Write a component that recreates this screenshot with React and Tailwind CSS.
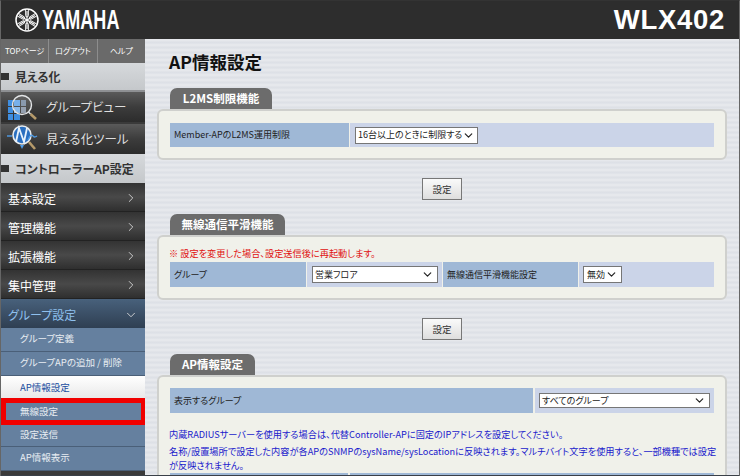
import React from 'react';
import { ChevronRight, ChevronDown } from 'lucide-react';

const font = "font-['Noto_Sans_CJK_JP','Liberation_Sans',sans-serif] [font-feature-settings:'palt']";

function YamahaMark() {
  const fork = (
    <g>
      <path d="M12 12V21M12 12V3" stroke="#fff" strokeWidth="1.1" />
      <path d="M10.6 1.8V7.5Q10.6 9 12 9Q13.4 9 13.4 7.5V1.8" fill="none" stroke="#fff" strokeWidth="0.9" />
      <path d="M10.6 22.2V16.5Q10.6 15 12 15Q13.4 15 13.4 16.5V22.2" fill="none" stroke="#fff" strokeWidth="0.9" />
    </g>
  );
  return (
    <svg width="24" height="24" viewBox="0 0 24 24" className="shrink-0">
      <circle cx="12" cy="12" r="11" fill="none" stroke="#fff" strokeWidth="1.5" />
      {fork}
      <g transform="rotate(60 12 12)">{fork}</g>
      <g transform="rotate(120 12 12)">{fork}</g>
    </svg>
  );
}

function GroupViewIcon() {
  return (
    <svg width="40" height="30" viewBox="0 0 40 30">
      <rect x="7" y="8" width="5" height="6" fill="#3f8ee0" />
      <rect x="13" y="8" width="6" height="6" fill="#6aa8e8" />
      <rect x="20" y="8" width="5" height="6" fill="#7d8fa5" />
      <rect x="7" y="15" width="5" height="6" fill="#3f8ee0" />
      <rect x="13" y="15" width="6" height="6" fill="#7fb4ea" />
      <rect x="20" y="15" width="5" height="6" fill="#8a97a8" />
      <rect x="7" y="22" width="5" height="6" fill="#3f8ee0" />
      <rect x="13" y="22" width="6" height="6" fill="#3f8ee0" />
      <circle cx="21" cy="13" r="9.5" fill="#ffffff18" stroke="#e4e6e8" strokeWidth="1.4" />
      <path d="M27.5 20L29.5 22" stroke="#dfe2e5" strokeWidth="1.4" />
      <path d="M29.5 22L35 27" stroke="#b59a6a" strokeWidth="2.6" />
    </svg>
  );
}

function ToolIcon() {
  return (
    <svg width="40" height="30" viewBox="0 0 40 30">
      <circle cx="21" cy="11" r="9" fill="#2a6fc0" stroke="#e8ebee" strokeWidth="1.6" />
      <path d="M6 12H11" stroke="#4f9de8" strokeWidth="1.4" />
      <path d="M15 18L18 4L23 18L26 4" fill="none" stroke="#e8f2fc" strokeWidth="1.8" />
      <path d="M27 16Q30 9 32 12Q33 14 36 12" fill="none" stroke="#4f9de8" strokeWidth="1.4" />
      <path d="M19 21H23L21 25Z" fill="#4f9de8" />
      <path d="M28 18L34 25" stroke="#b59a6a" strokeWidth="2.6" />
    </svg>
  );
}

function SectionTitle({ children, className }) {
  return (
    <div className={"flex items-center gap-[6px] text-[12px] font-bold text-[#333] bg-gradient-to-b from-[#d6d9dc] to-[#c5c8cb] border-[#8e9093] " + className}>
      <span className="w-[8px] h-[7px] bg-[#333]" />
      {children}
    </div>
  );
}

function ToolLink({ icon, label, className }) {
  return (
    <div className={"h-[30px] flex items-center bg-gradient-to-b from-[#5a5a5a] via-[#3c3c3c] to-[#2c2c2c] text-[#dedede] text-[12.5px] " + className}>
      <span className="w-[45px] h-[30px] shrink-0 overflow-hidden">{icon}</span>
      {label}
    </div>
  );
}

function MenuItem({ label }) {
  return (
    <div className="h-[29px] shrink-0 flex items-center justify-between pl-[7px] pr-[7px] pt-[3px] bg-gradient-to-b from-[#333] via-[#494949] to-[#2f2f2f] border-b border-[#222] text-white text-[12px]">
      {label}
      <ChevronRight size={14} strokeWidth={1.5} className="text-[#ddd] -mt-[2px]" />
    </div>
  );
}

function SubItem({ label, active, marked, height }) {
  if (active) {
    return <div className={"flex items-center pl-[19px] bg-gradient-to-b from-[#fff] to-[#e9e9e9] text-[#1a4fa0] text-[9.5px] " + height}>{label}</div>;
  }
  if (marked) {
    return <div className={"flex items-center pl-[14px] border-[5px] border-r-[4px] border-[#f00000] bg-[#65809f] text-[#e8edf2] text-[9.5px] " + height}>{label}</div>;
  }
  return <div className={"flex items-center pl-[19px] pb-[2px] bg-[#65809f] border-b border-[#4a5f78] text-[#e8edf2] text-[9.5px] " + height}>{label}</div>;
}

function FakeSelect({ children, className }) {
  return (
    <div className={"flex items-center justify-between pl-[2px] pr-[3px] bg-white border border-[#767676] text-[9px] text-[#222] " + className}>
      <span className="whitespace-nowrap">{children}</span>
      <ChevronDown size={13} strokeWidth={2.2} className="text-[#222] shrink-0" />
    </div>
  );
}

function SetButton() {
  return (
    <div className="flex justify-center mt-[18px] mb-[14px]">
      <div className="w-[40px] h-[22px] flex items-center justify-center border border-[#777] bg-gradient-to-b from-[#fafafa] to-[#dedede] text-[9.5px] text-[#333]">設定</div>
    </div>
  );
}

function Panel({ tab, tabWidth, children, className }) {
  return (
    <section>
      <div className={"ml-[13px] h-[21px] flex items-center justify-center rounded-t-[7px] bg-[#6c6c6c] text-white text-[11.5px] font-bold " + tabWidth}>{tab}</div>
      <div className={"rounded-[6px] border-2 border-[#cfd0cd] bg-[#f0f1ea] px-[11px] " + className}>{children}</div>
    </section>
  );
}

const labelCell = "flex items-center pl-1 bg-[#9fb8d6] text-[9px] text-[#222]";
const valueCell = "flex items-center bg-[#cbd4e8]";

export default function App() {
  return (
    <div className={"w-[740px] h-[476px] overflow-hidden flex flex-col border-x border-[#666] border-t border-t-[#333] " + font}>
      <header className="h-[38px] shrink-0 flex items-center justify-between bg-[#2d2d2d] pl-[14px] pr-[14px]">
        <div className="flex items-center gap-[3px]">
          <YamahaMark />
          <span className="w-[80px] font-['Liberation_Sans'] font-bold text-[27px] leading-none text-white inline-block scale-x-[0.667] origin-left">YAMAHA</span>
        </div>
        <span className="font-['Liberation_Sans'] text-[27.5px] leading-none text-white tracking-[0.7px] font-bold">WLX402</span>
      </header>
      <div className="flex-1 flex min-h-0">
        <aside className="w-[144px] shrink-0 flex flex-col bg-[#3a3a3a] overflow-hidden">
          <div className="h-[24px] shrink-0 grid grid-cols-3 gap-px bg-[#8d8d8d] text-[8px] text-white">
            <div className="flex items-center justify-center bg-[#6a6a6a] whitespace-nowrap">TOPページ</div>
            <div className="flex items-center justify-center bg-[#6a6a6a]">ログアウト</div>
            <div className="flex items-center justify-center bg-[#6a6a6a]">ヘルプ</div>
          </div>
          <SectionTitle className="h-[29px] shrink-0 border-b-2">見える化</SectionTitle>
          <ToolLink icon={<GroupViewIcon />} label="グループビュー" className="mb-[2px] shrink-0" />
          <ToolLink icon={<ToolIcon />} label="見える化ツール" className="shrink-0" />
          <SectionTitle className="h-[29px] shrink-0">コントローラーAP設定</SectionTitle>
          <MenuItem label="基本設定" />
          <MenuItem label="管理機能" />
          <MenuItem label="拡張機能" />
          <MenuItem label="集中管理" />
          <div className="h-[29px] shrink-0 flex items-center justify-between pl-[7px] pr-[7px] pt-[2px] bg-gradient-to-b from-[#48617c] to-[#2f3f52] text-[#8fc0ee] text-[12px]">
            グループ設定
            <ChevronDown size={14} strokeWidth={1.5} className="text-[#ddd]" />
          </div>
          <SubItem label="グループ定義" height="h-[24px] shrink-0" />
          <SubItem label="グループAPの追加 / 削除" height="h-[24px] shrink-0" />
          <SubItem label="AP情報設定" active height="h-[22px] shrink-0" />
          <SubItem label="無線設定" marked height="h-[27px] shrink-0" />
          <SubItem label="設定送信" height="h-[22px] shrink-0" />
          <SubItem label="AP情報表示" height="h-[24px] shrink-0" />
        </aside>
        <main className="flex-1 min-w-0 overflow-hidden pl-[12px] pr-[12px] bg-[#e3e6ea] bg-[repeating-linear-gradient(180deg,#e6e8ec_0px,#e6e8ec_2px,#dcdfe5_3px,#e2e5ea_5px)]">
          <h1 className="pl-[12px] pt-[11px] pb-[14px] text-[17.5px] leading-[24px] font-bold text-[#111]">AP情報設定</h1>
          <Panel tab="L2MS制限機能" tabWidth="w-[102px]" className="h-[51px] pt-[12px]">
            <div className="flex gap-px h-[24px]">
              <div className={labelCell + " w-[179px]"}>Member-APのL2MS運用制限</div>
              <div className={valueCell + " flex-1 pl-[5px]"}>
                <FakeSelect className="w-[123px] h-[17px]">16台以上のときに制限する</FakeSelect>
              </div>
            </div>
          </Panel>
          <SetButton />
          <Panel tab="無線通信平滑機能" tabWidth="w-[115px]" className="h-[65px]">
            <p className="text-[9.2px] leading-[14px] pt-[9px] pb-[2px] -ml-px text-[#e01010]">※ 設定を変更した場合、設定送信後に再起動します。</p>
            <div className="grid grid-cols-[136px_135px_135px_1fr] gap-px h-[25px]">
              <div className={labelCell}>グループ</div>
              <div className={valueCell + " pl-[5px]"}>
                <FakeSelect className="w-[126px] h-[17px]">営業フロア</FakeSelect>
              </div>
              <div className={labelCell}>無線通信平滑機能設定</div>
              <div className={valueCell + " pl-[4px]"}>
                <FakeSelect className="w-[39px] h-[17px] pl-[3px]">無効</FakeSelect>
              </div>
            </div>
          </Panel>
          <SetButton />
          <Panel tab="AP情報設定" tabWidth="w-[85px]" className="h-[140px] pt-[11px]">
            <div className="flex gap-[2px] h-[25px]">
              <div className={labelCell + " w-[363px]"}>表示するグループ</div>
              <div className={valueCell + " flex-1 pl-[4px]"}>
                <FakeSelect className="w-[171px] h-[15px]">すべてのグループ</FakeSelect>
              </div>
            </div>
            <div className="text-[9.2px] text-[#1a1acc] mt-[12px] -ml-px whitespace-nowrap">
              <p className="leading-[18px]">内蔵RADIUSサーバーを使用する場合は、代替Controller-APに固定のIPアドレスを設定してください。</p>
              <p className="leading-[14px] mt-px">名称/設置場所で設定した内容が各APのSNMPのsysName/sysLocationに反映されます。マルチバイト文字を使用すると、一部機種では設定<br />が反映されません。</p>
            </div>
            <div className="flex gap-[2px] h-[24px] mt-px">
              <div className="w-[178px] bg-[#9fb8d6]" />
              <div className="flex-1 bg-[#9fb8d6]" />
            </div>
          </Panel>
        </main>
      </div>
      <div className="h-[1px] shrink-0 bg-[#3a4048]" />
    </div>
  );
}
